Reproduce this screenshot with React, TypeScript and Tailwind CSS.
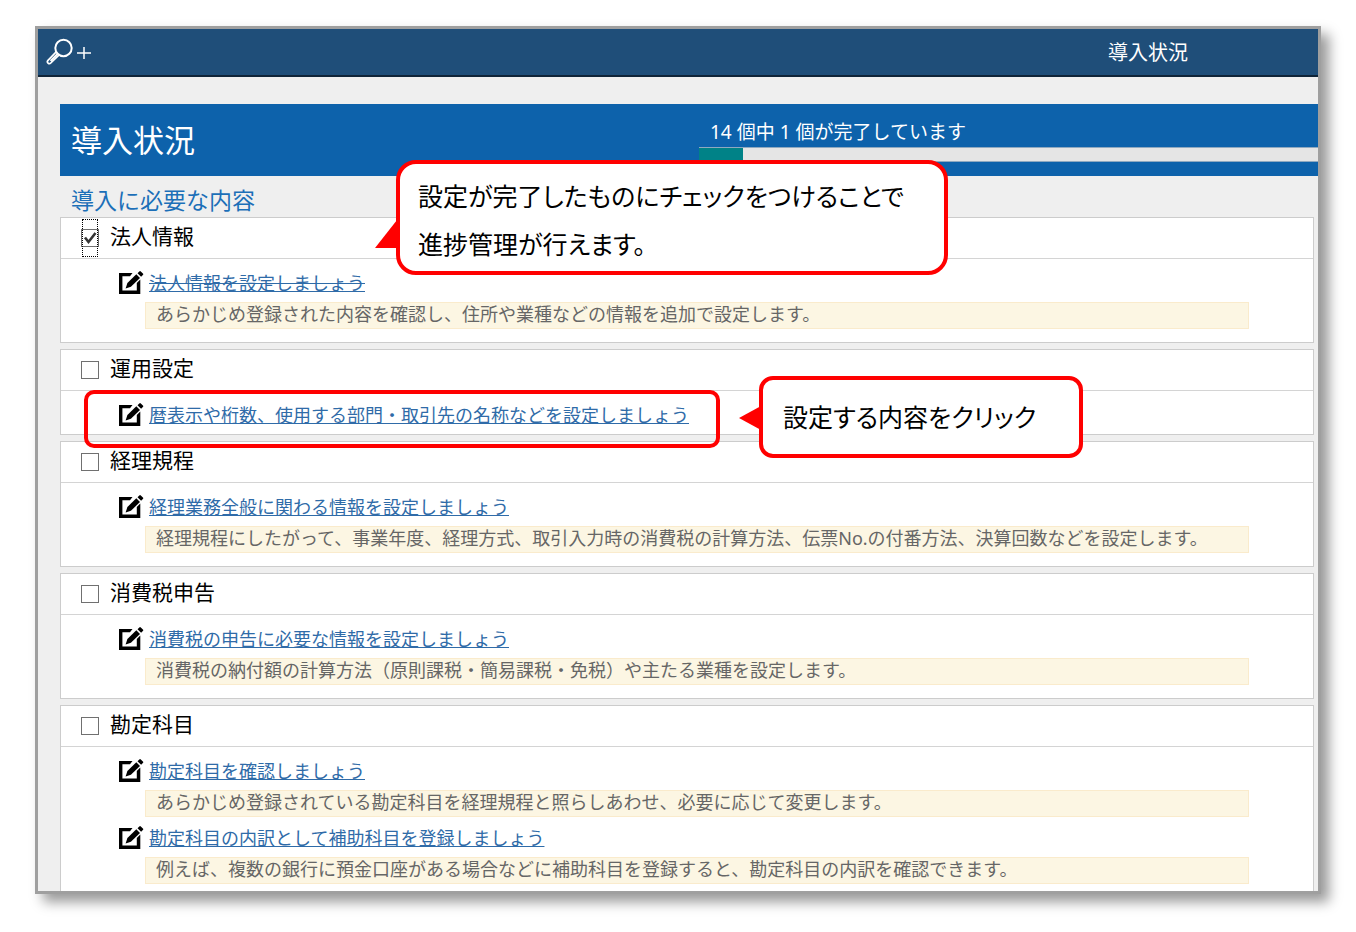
import { useState } from 'react';

interface Task {
  title: string;
  description?: string;
}

interface TaskGroup {
  id: string;
  name: string;
  tasks: Task[];
}

const TOTAL_COUNT = 14;

const GROUPS: TaskGroup[] = [
  {
    id: 'corporate',
    name: '法人情報',
    tasks: [
      {
        title: '法人情報を設定しましょう',
        description: 'あらかじめ登録された内容を確認し、住所や業種などの情報を追加で設定します。',
      },
    ],
  },
  {
    id: 'operation',
    name: '運用設定',
    tasks: [{ title: '暦表示や桁数、使用する部門・取引先の名称などを設定しましょう' }],
  },
  {
    id: 'accounting',
    name: '経理規程',
    tasks: [
      {
        title: '経理業務全般に関わる情報を設定しましょう',
        description:
          '経理規程にしたがって、事業年度、経理方式、取引入力時の消費税の計算方法、伝票No.の付番方法、決算回数などを設定します。',
      },
    ],
  },
  {
    id: 'tax',
    name: '消費税申告',
    tasks: [
      {
        title: '消費税の申告に必要な情報を設定しましょう',
        description: '消費税の納付額の計算方法（原則課税・簡易課税・免税）や主たる業種を設定します。',
      },
    ],
  },
  {
    id: 'accounts',
    name: '勘定科目',
    tasks: [
      {
        title: '勘定科目を確認しましょう',
        description: 'あらかじめ登録されている勘定科目を経理規程と照らしあわせ、必要に応じて変更します。',
      },
      {
        title: '勘定科目の内訳として補助科目を登録しましょう',
        description: '例えば、複数の銀行に預金口座がある場合などに補助科目を登録すると、勘定科目の内訳を確認できます。',
      },
    ],
  },
];

function SearchIcon() {
  return (
    <svg className="h-7 w-7" viewBox="0 0 28 28" fill="none" stroke="currentColor" strokeWidth={2}>
      <circle cx="17.5" cy="10" r="8.2" />
      <path d="M10.2 13.8 2 22.3a1.9 1.9 0 0 0 2.800 2.700l8.600-8.300M4.500 22.800l7-7" strokeWidth={1.7} />
    </svg>
  );
}

function EditIcon() {
  return (
    <svg className="h-6 w-[25px] shrink-0 text-black" viewBox="0 0 25 24" fill="currentColor">
      <path d="M0 2h13.500l-2.500 3.300H3.400v14.200h14.400V12l3.500-3.500V23H0z" />
      <path d="M6.600 17.600 8.400 12l8.900-8.700 3.700 3.700-9.100 8.800z" />
      <path d="m18.500 2.200 1.800-1.800q.8-.700 1.500 0l2.100 2.100q.7.700 0 1.500l-1.800 1.800z" />
    </svg>
  );
}

interface GroupPanelProps {
  group: TaskGroup;
  checked: boolean;
  focused: boolean;
  onToggle: () => void;
}

function GroupPanel({ group, checked, focused, onToggle }: GroupPanelProps) {
  const hasDescription = group.tasks.some((task) => task.description);

  return (
    <section className="border border-[#cccccc] bg-white last:border-b-0 last:[&>ul]:pb-[7px]">
      <div className="flex h-[41px] items-center border-b border-[#d4d4d4] pl-5">
        <span className="relative flex h-[18px] w-[18px]">
          <input
            id={group.id}
            type="checkbox"
            checked={checked}
            onChange={onToggle}
            className="h-[18px] w-[18px] appearance-none border border-[#707070] bg-white outline-none"
          />
          {checked && (
            <svg
              className="pointer-events-none absolute inset-0 h-[18px] w-[18px]"
              viewBox="0 0 18 18"
              fill="none"
              stroke="#333"
              strokeWidth={2.6}
            >
              <path d="m4 8.500 3.500 4.500L14.500 4" />
            </svg>
          )}
          {focused && (
            <span className="pointer-events-none absolute inset-x-px -inset-y-2.5 border border-dotted border-black" />
          )}
        </span>
        <label htmlFor={group.id} className="pb-1 pl-[11px] text-[21px] leading-8 text-black">
          {group.name}
        </label>
      </div>

      <ul className={`space-y-1.5 pt-[9px] ${hasDescription ? 'pb-[13px]' : 'pb-1'}`}>
        {group.tasks.map((task) => (
          <li key={task.title}>
            <div className="flex h-[30px] items-center gap-[5px] pl-[58px]">
              <EditIcon />
              <a
                href="#"
                className={
                  checked
                    ? 'text-[18px] leading-6 text-[#2f6ba8] [text-decoration-line:underline_line-through]'
                    : 'text-[18px] leading-6 text-[#2f6ba8] underline'
                }
              >
                {task.title}
              </a>
            </div>
            {task.description && (
              <p className="mt-1 mr-16 ml-[84px] border border-[#faebcc] bg-[#fcf6e3] pb-0.5 pl-2.5 text-[18px] leading-[23px] text-[#666666]">
                {task.description}
              </p>
            )}
          </li>
        ))}
      </ul>
    </section>
  );
}

export default function App() {
  const [done, setDone] = useState<string[]>(['corporate']);

  const toggle = (id: string) => {
    setDone((prev) => (prev.includes(id) ? prev.filter((x) => x !== id) : [...prev, id]));
  };

  return (
    <div className="bg-white px-[35px] pt-[26px] pb-[39px] font-['Noto_Sans','Noto_Sans_CJK_JP',sans-serif]">
      <div className="relative border-3 border-[#9f9f9f] bg-[#efefef] shadow-[8px_8px_12px_rgba(0,0,0,0.4)]">
        {/* Title bar */}
        <header className="flex h-12 items-center justify-between border-b-2 border-[#0f2438] bg-[#1f4e79] pr-[130px] pl-2 text-white">
          <button type="button" aria-label="拡大" className="flex items-center gap-0.5">
            <SearchIcon />
            <svg className="h-4 w-4" viewBox="0 0 16 16" stroke="currentColor" strokeWidth={1.5}>
              <path d="M1 9h14M8 3v12" />
            </svg>
          </button>
          <span className="pt-0.5 text-[20px] leading-8">導入状況</span>
        </header>

        <main className="pt-[27px] pl-[22px]">
          {/* Progress banner */}
          <div className="grid h-[72px] grid-cols-[639px_1fr] bg-[#0d62ab] text-white">
            <h1 className="self-center pl-[11px] text-[31px] leading-10">導入状況</h1>
            <div className="pt-3.5">
              <p className="pl-[11px] text-[19px] leading-7">
                {TOTAL_COUNT} 個中 {done.length} 個が完了しています
              </p>
              <div
                role="progressbar"
                aria-label="導入状況"
                aria-valuemin={0}
                aria-valuemax={TOTAL_COUNT}
                aria-valuenow={done.length}
                className="mt-px h-[15px] border-y border-[#8fa9c0] bg-[#e5e5e5]"
              >
                <div className="h-full bg-[#008287]" style={{ width: `${(done.length / TOTAL_COUNT) * 100}%` }} />
              </div>
            </div>
          </div>

          <h2 className="h-[41px] pt-2 pl-[11px] text-[23px] leading-8 text-[#1c6fb8]">導入に必要な内容</h2>

          <div className="mr-1 space-y-1.5">
            {GROUPS.map((group) => (
              <GroupPanel
                key={group.id}
                group={group}
                checked={done.includes(group.id)}
                focused={group.id === 'corporate'}
                onToggle={() => toggle(group.id)}
              />
            ))}
          </div>
        </main>

        {/* Guide annotations */}
        <div className="pointer-events-none absolute top-[361px] left-[46px] h-[58px] w-[636px] rounded-[10px] border-4 border-[#ff0000]" />

        <div className="absolute top-[131px] left-[358px] h-[115px] w-[552px] rounded-[20px] border-4 border-[#ff0000] bg-white pt-2 pl-[18px] text-[25px] leading-[48px] text-black [font-feature-settings:'palt']">
          <svg className="absolute top-[56px] -left-[25px] h-7 w-[22px]" viewBox="0 0 22 28" fill="#ff0000">
            <path d="M22 0v28H0z" />
          </svg>
          設定が完了したものにチェックをつけることで
          <br />
          進捗管理が行えます。
        </div>

        <div className="absolute top-[347px] left-[721px] flex h-[82px] w-[324px] items-center rounded-[14px] border-4 border-[#ff0000] bg-white pl-5 text-[25px] leading-[48px] text-black [font-feature-settings:'palt']">
          <svg className="absolute top-[26px] -left-6 h-6 w-[22px]" viewBox="0 0 22 24" fill="#ff0000">
            <path d="M22 0v24L0 12z" />
          </svg>
          設定する内容をクリック
        </div>
      </div>
    </div>
  );
}
